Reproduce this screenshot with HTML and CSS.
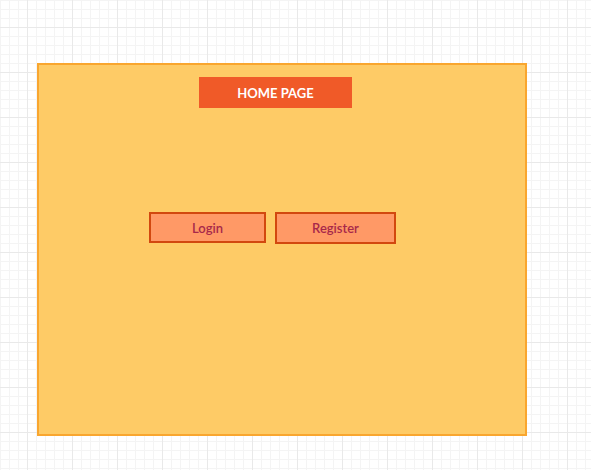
FILE: index.html
```html
<!DOCTYPE html>
<html>
<head>
<meta charset="utf-8">
<link rel="stylesheet" href="styles.css">
</head>
<body>
<div class="canvas">
  <div class="page">
    <div class="header">HOME PAGE</div>
    <div class="actions">
      <button class="btn btn-login">Login</button>
      <button class="btn btn-register">Register</button>
    </div>
  </div>
</div>
</body>
</html>
```
FILE: styles.css
```css
html, body {
  margin: 0;
  padding: 0;
}
body {
  width: 591px;
  height: 470px;
  overflow: hidden;
  font-family: Lato, "Open Sans", sans-serif;
  background-color: #ffffff;
  background-image:
    linear-gradient(to right, #e9e9e9 1px, transparent 1px),
    linear-gradient(to bottom, #e9e9e9 1px, transparent 1px),
    linear-gradient(to right, #f4f4f4 1px, transparent 1px),
    linear-gradient(to bottom, #f4f4f4 1px, transparent 1px);
  background-size: 45px 45px, 45px 45px, 9px 9px, 9px 9px;
  background-position: 27px 27px, 27px 27px, 0 0, 0 0;
}
.canvas {
  padding-top: 63px;
  padding-left: 37px;
}
.page {
  box-sizing: border-box;
  width: 490px;
  height: 373px;
  background: #fecb66;
  border: 2px solid #f9a62f;
  display: flex;
  flex-direction: column;
  align-items: flex-start;
}
.header {
  margin-top: 12px;
  margin-left: 160px;
  width: 153px;
  height: 31px;
  background: #f05a28;
  color: #ffffff;
  font-weight: 700;
  font-size: 13px;
  display: flex;
  align-items: center;
  justify-content: center;
}
.actions {
  margin-top: 104px;
  margin-left: 110px;
  display: flex;
  gap: 9px;
  align-items: flex-start;
}
.btn {
  box-sizing: border-box;
  background: #ff9966;
  border: 2px solid #d2480f;
  color: #a8284a;
  font-family: Lato, "Open Sans", sans-serif;
  font-size: 13px;
  font-weight: 600;
  padding: 0;
  display: flex;
  align-items: center;
  justify-content: center;
}
.btn-login {
  width: 117px;
  height: 31px;
}
.btn-register {
  width: 121px;
  height: 32px;
}
```
